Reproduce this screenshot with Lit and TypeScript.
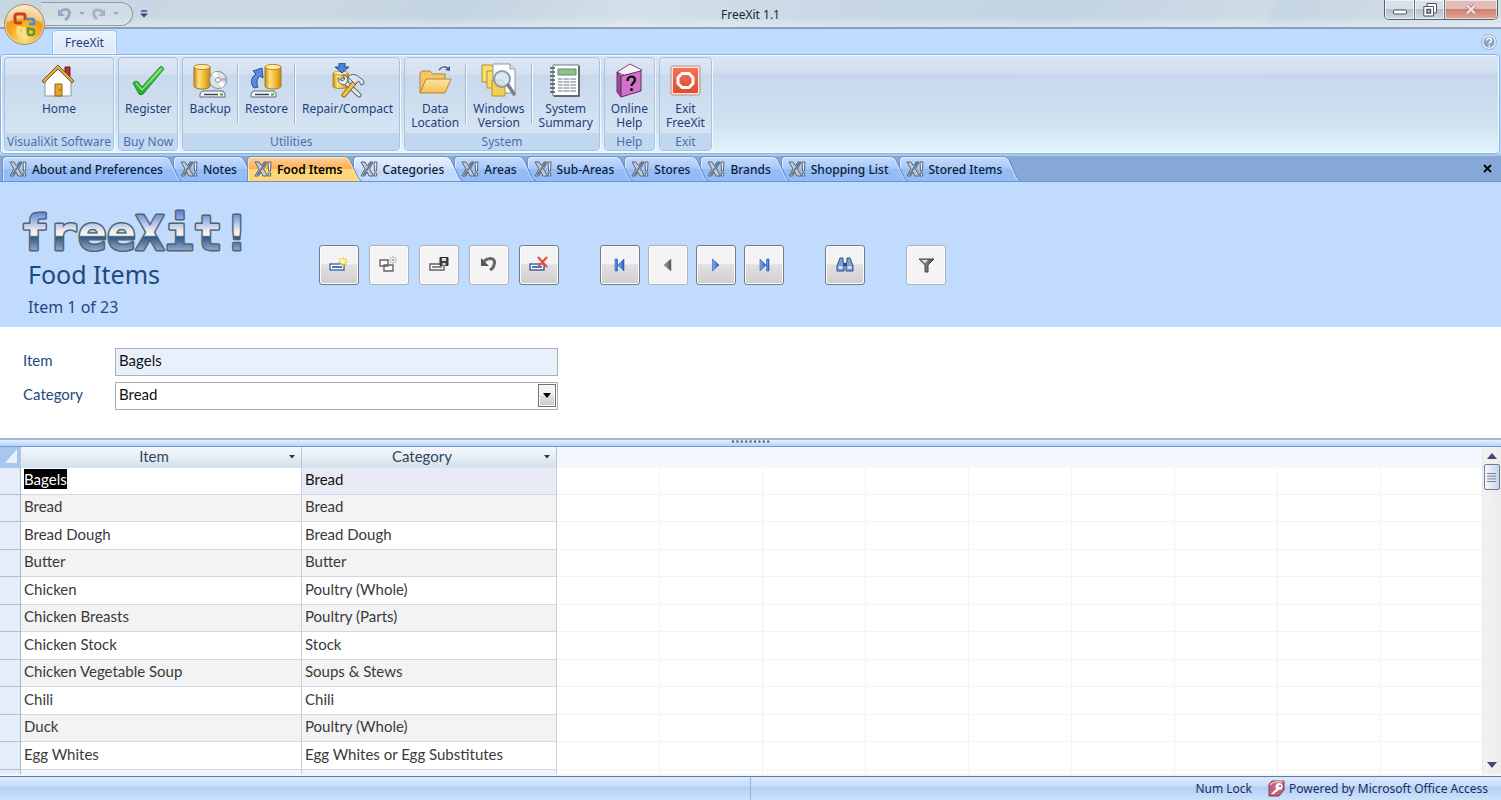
import { LitElement, html, css, svg, nothing } from "lit";
import { customElement, state } from "lit/decorators.js";
import { classMap } from "lit/directives/class-map.js";
import { styleMap } from "lit/directives/style-map.js";

/* ---------- ribbon artwork ---------- */

const drive = svg`
  <path d="M6 27h21l2 3v3H4v-3z" fill="#f4f6f9" stroke="#5d6672"/>
  <path d="M8 30.5h14" stroke="#3d444e" stroke-width="1.6"/>
  <rect x="24" y="29.5" width="3" height="2" fill="#39a94a"/>`;

const cylinder = svg`
  <path d="M0 3v19c0 4 16 4 16 0V3z" fill="url(#gold)" stroke="#a97a1c"/>
  <ellipse cx="8" cy="3" rx="8" ry="2.6" fill="#fdeaa6" stroke="#b98a26"/>`;

const ribbonIcons: Record<string, unknown> = {
  home: svg`
    <path d="M24 4h5v11h-5z" fill="#a33b34" stroke="#6d211d"/>
    <path d="M4 17 17 5l13 12v16H4z" fill="#fdfdfe" stroke="#8a93a0"/>
    <path d="M1 18 17 2l16 16-2 2L17 6 3 20z" fill="#d9a94a" stroke="#7c5a1e"/>
    <path d="M14 21h7v12h-7z" fill="#e8a32c" stroke="#8f6516"/>
    <circle cx="19" cy="27" r=".8" fill="#6b4a0c"/>`,
  check: svg`
    <path d="M2 20c2-2 3-2 5-1l4 5L29 4c2-1 3 0 4 2L12 31c-1 1-3 1-4 0z" fill="url(#green)" stroke="#1d8a26"/>
    <path d="M5 20l6 7L30 6" fill="none" stroke="#a6f09a" stroke-width="1.2" opacity=".8"/>`,
  backup: svg`
    <g transform="translate(1 1)">${cylinder}</g>
    <g transform="translate(3 1)">${drive}</g>
    <circle cx="25" cy="17" r="8.5" fill="#dfe4ea" stroke="#7d8794"/>
    <path d="M25 17 19 11a8.500 8.500 0 0 1 5-2.300zM25 17l7 4a8.500 8.500 0 0 1-4 4z" fill="#fff"/>
    <path d="M25 17l8-3a8 8 0 0 1 .3 4z" fill="#b9a9dc"/>
    <circle cx="25" cy="17" r="2.500" fill="#fff" stroke="#858f9c"/>`,
  restore: svg`
    <g transform="translate(16 1)">${cylinder}</g>
    <g transform="translate(-2 1)">${drive}</g>
    <path d="M5 25c-4-5-3-11 2-14l-3-3 9-3 1 10-3-2c-3 2-4 7-2 11z" fill="#5b8ce0" stroke="#24509f"/>`,
  repair: svg`
    <g transform="translate(3 8) scale(.95 .7)">${cylinder}</g>
    <path d="M9 0h6v4h4l-7 6-7-6h4z" fill="#4a83dc" stroke="#1f4d9b"/>
    <path d="M29 32 13 17" stroke="#5f6873" stroke-width="5" stroke-linecap="round"/>
    <path d="M29 32 13 17" stroke="#e9edf2" stroke-width="3" stroke-linecap="round"/>
    <path d="M8 15c0 5 4 8 8 6l1-2c2-4-1-7-4-7l2 4-3 2z" fill="#e9edf2" stroke="#5f6873"/>
    <path d="M14 32 25 19" stroke="#8f6516" stroke-width="5" stroke-linecap="round"/>
    <path d="M14 32 25 19" stroke="#f0c44e" stroke-width="3" stroke-linecap="round"/>
    <path d="M18 14c3-4 9-3 12 1 3 1 4 3 4 6l-3 1-2-4-4 3z" fill="#dbe1e8" stroke="#5f6873"/>`,
  folder: svg`
    <path d="M2 30V10l2-2h8l3 3h12v6" fill="#f3c766" stroke="#b58630"/>
    <path d="M2 30 8 16h25l-6 14z" fill="url(#folder)" stroke="#b58630"/>
    <path d="M21 7c3-4 7-4 9-1" fill="none" stroke="#44607f" stroke-width="1.500"/>
    <path d="m27 7 5 1V3z" fill="#44607f"/>`,
  search: svg`
    <path d="M1 2h9l3 3v14H1z" fill="#f7dc6e" stroke="#b3912b"/>
    <path d="M6 8h9l3 3v14H6z" fill="#f7dc6e" stroke="#b3912b"/>
    <path d="M12 1h17l5 5v24H12z" fill="#fff" stroke="#8d97a5"/>
    <path d="M29 1v5h5" fill="#dde4ee" stroke="#8d97a5"/>
    <path d="M11 17h10l3 3v13H11z" fill="#f5d04e" stroke="#b3912b"/>
    <circle cx="21" cy="16" r="8" fill="#cfe3f5" fill-opacity=".85" stroke="#8c9aac" stroke-width="2"/>
    <path d="m27 22 6 9" stroke="#767f8c" stroke-width="3.400" stroke-linecap="round"/>`,
  report: svg`
    <path d="M5 2h26v31H5z" fill="#fff" stroke="#6b797e"/>
    <path d="M31 3v30H6" fill="none" stroke="#4a565c" stroke-width="1.500"/>
    <path d="M10 6h18v6H10z" fill="#8fbf8c" stroke="#5d9261"/>
    <path d="M10 16h18M10 19h18M10 22h18M10 25h18M10 28h18" stroke="#97a2b0" stroke-width="1.500"/>
    <path d="M15 15v15M22 15v15" stroke="#fff"/>
    <path d="M2 5h5M2 9h5M2 13h5M2 17h5M2 21h5M2 25h5M2 29h5" stroke="#4b565f" stroke-width="1.500"/>`,
  book: svg`
    <path d="M5 9 18 1l12 6-12 8z" fill="#f5f1f6" stroke="#7a4a78"/>
    <path d="M5 9l4 4v21l-4-5z" fill="#a24a9b" stroke="#6b2a68"/>
    <path d="M9 13l20-5v20L9 34z" fill="#cf74c8" stroke="#6b2a68"/>
    <path d="M15.500 18c0-5 7.500-6 7.500-1.500 0 3.500-3.500 3.500-3.500 6.500" fill="none" stroke="#111" stroke-width="2.400"/>
    <circle cx="19.500" cy="26.500" r="1.600" fill="#111"/>`,
  stop: svg`
    <rect x="4" y="4" width="27" height="27" rx="2" fill="url(#red)" stroke="#f8e6e0" stroke-width="2"/>
    <rect x="3" y="3" width="29" height="29" rx="2" fill="none" stroke="#bb8a80"/>
    <path d="M14 10.500h7l4 4v6l-4 4h-7l-4-4v-6z" fill="none" stroke="#fff" stroke-width="3"/>`,
};

/* ---------- record toolbar artwork ---------- */

const record = (frame: string, fill: string) => svg`
  <path d="M2 10h14v6H2z" fill="#fff" stroke="${frame}" stroke-width="1.500"/>
  <path d="M4 12h10v2H4z" fill="${fill}"/>`;

const toolIcons: Record<string, unknown> = {
  add: svg`${record("#5b6f93", "#3a78e0")}
    <path d="M15 3v10M10 8h10M11.500 4.500l7 7M18.500 4.500l-7 7" stroke="#ecd03c" stroke-width="1.500" stroke-dasharray="2.500 1"/>
    <circle cx="15" cy="8" r="2" fill="#fff8b8"/>`,
  duplicate: svg`
    <path d="M2 6h8v6H2zM6 11h9v6H6z" fill="#fff" stroke="#666" stroke-width="1.400"/>
    <path d="M15 2v8M11 6h8M12 3l6 6M18 3l-6 6" stroke="#a5a5a5" stroke-dasharray="2 1"/>`,
  save: svg`${record("#666", "#888")}
    <path d="M12 3.500h8v8h-8z" fill="#444" stroke="#333"/><path d="M14 4h4v3h-4zM14.500 9h3v2.500h-3z" fill="#ddd"/>`,
  undo: svg`<path d="M6 7c7-5 12-2 10 4-.5 3-2 4-4 5" fill="none" stroke="#666" stroke-width="3"/>
    <path d="M3 4v8h8z" fill="#555"/>`,
  remove: svg`${record("#4b628c", "#3a78e0")}
    <path d="m10 3 9 10M19 3l-9 10" stroke="#e8503a" stroke-width="2.200"/>`,
  first: svg`<path d="M6 5h2.500v12H6z" fill="url(#nav)" stroke="#2757b5" stroke-width=".6"/>
    <path d="M15 5v12L9 11z" fill="url(#nav)" stroke="#2757b5" stroke-width=".6"/>`,
  previous: svg`<path d="M14 5v12L7 11z" fill="url(#gray)" stroke="#777" stroke-width=".6"/>`,
  next: svg`<path d="M7.500 5v12l6.500-6z" fill="url(#nav)" stroke="#2757b5" stroke-width=".6"/>`,
  last: svg`<path d="M7 5v12l6-6z" fill="url(#nav)" stroke="#2757b5" stroke-width=".6"/>
    <path d="M13.500 5H16v12h-2.500z" fill="url(#nav)" stroke="#2757b5" stroke-width=".6"/>`,
  find: svg`<path d="M6 4h3v3l1 3v7H3v-5zM13 4h3l3 8v5h-7v-7l1-3z" fill="#7ba1d8" stroke="#2c4f8a"/>
    <path d="M9 9h4v3H9z" fill="#2c4f8a"/><path d="M4.500 13.500h4M13.500 13.500h4" stroke="#eef5ff" stroke-width="2"/>`,
  filter: svg`<path d="M4 5h15l-6 6v7h-3v-7z" fill="url(#gray)" stroke="#444"/><path d="M7 6h6l-3 3z" fill="#eee"/>`,
};

const defs = svg`
  <linearGradient id="gold"><stop offset="0" stop-color="#c98a12"/><stop offset=".3" stop-color="#ffe27e"/><stop offset=".7" stop-color="#eeb32c"/><stop offset="1" stop-color="#c48a17"/></linearGradient>
  <linearGradient id="green" x2="0" y2="1"><stop offset="0" stop-color="#5fd44f"/><stop offset="1" stop-color="#23a92c"/></linearGradient>
  <linearGradient id="folder" x2="0" y2="1"><stop offset="0" stop-color="#ffe6a0"/><stop offset="1" stop-color="#f4bd57"/></linearGradient>
  <linearGradient id="red" x2="0" y2="1"><stop offset="0" stop-color="#f4745a"/><stop offset="1" stop-color="#e0482c"/></linearGradient>
  <linearGradient id="nav"><stop offset="0" stop-color="#7fb0f8"/><stop offset="1" stop-color="#2459c4"/></linearGradient>
  <linearGradient id="gray"><stop offset="0" stop-color="#aaa"/><stop offset="1" stop-color="#4c4c4c"/></linearGradient>`;

interface Command { icon: string; lines: string[] }
interface Group { title: string; commands: Command[] }

const groups: Group[] = [
  { title: "VisualiXit Software", commands: [{ icon: "home", lines: ["Home"] }] },
  { title: "Buy Now", commands: [{ icon: "check", lines: ["Register"] }] },
  { title: "Utilities", commands: [
    { icon: "backup", lines: ["Backup"] },
    { icon: "restore", lines: ["Restore"] },
    { icon: "repair", lines: ["Repair/Compact"] },
  ] },
  { title: "System", commands: [
    { icon: "folder", lines: ["Data", "Location"] },
    { icon: "search", lines: ["Windows", "Version"] },
    { icon: "report", lines: ["System", "Summary"] },
  ] },
  { title: "Help", commands: [{ icon: "book", lines: ["Online", "Help"] }] },
  { title: "Exit", commands: [{ icon: "stop", lines: ["Exit", "FreeXit"] }] },
];

const documents = ["About and Preferences", "Notes", "Food Items", "Categories", "Areas",
  "Sub-Areas", "Stores", "Brands", "Shopping List", "Stored Items"];

const tools: { icon: string; label: string; disabled?: boolean }[][] = [
  [
    { icon: "add", label: "Add record" },
    { icon: "duplicate", label: "Duplicate record", disabled: true },
    { icon: "save", label: "Save record", disabled: true },
    { icon: "undo", label: "Undo", disabled: true },
    { icon: "remove", label: "Delete record" },
  ],
  [
    { icon: "first", label: "First record" },
    { icon: "previous", label: "Previous record", disabled: true },
    { icon: "next", label: "Next record" },
    { icon: "last", label: "Last record" },
  ],
  [{ icon: "find", label: "Find" }],
  [{ icon: "filter", label: "Filter", disabled: true }],
];

const items: [string, string][] = [
  ["Bagels", "Bread"],
  ["Bread", "Bread"],
  ["Bread Dough", "Bread Dough"],
  ["Butter", "Butter"],
  ["Chicken", "Poultry (Whole)"],
  ["Chicken Breasts", "Poultry (Parts)"],
  ["Chicken Stock", "Stock"],
  ["Chicken Vegetable Soup", "Soups & Stews"],
  ["Chili", "Chili"],
  ["Duck", "Poultry (Whole)"],
  ["Egg Whites", "Egg Whites or Egg Substitutes"],
  ["", ""],
];

const buttonReset = css`
  * { box-sizing: border-box; }
  button {
    font: inherit;
    color: inherit;
    margin: 0;
    padding: 0;
    border: 0;
    background: none;
  }
  svg { display: block; flex: none; }
`;

/* ---------- title bar ---------- */

@customElement("window-title")
class WindowTitle extends LitElement {
  static styles = [buttonReset, css`
    :host {
      box-sizing: border-box;
      position: relative;
      display: grid;
      grid-template-columns: 1fr auto 1fr;
      align-items: start;
      height: 29px;
      border-bottom: 2px solid #8e9fb5;
      background:
        linear-gradient(180deg, rgba(255,255,255,.1) 60%, rgba(240,248,255,.5)),
        linear-gradient(115deg, #bfd1de 0, #c6d5e0 20%, #bccedd 30%, #cfdce6 42%, #c3d3e2 56%, #bdcede 70%, #c9d7e3 84%, #c0d1df 85%, #d2dde6);
      color: #1c2733;
    }
    .quick {
      display: flex;
      align-items: center;
      height: 27px;
      padding-left: 41px;
    }
    .pill {
      display: flex;
      align-items: center;
      gap: 5px;
      height: 24px;
      padding: 0 12px 0 16px;
      border: 1px solid #8e9aaa;
      border-left: 0;
      border-radius: 0 12px 12px 0;
      background: rgba(255,255,255,.15);
    }
    .more { margin-left: 7px; }
    .caption { font-size: 12px; line-height: 29px; }
    .frame {
      display: flex;
      justify-self: end;
      height: 20px;
      margin-right: 3px;
      overflow: hidden;
      border: 1px solid #56616f;
      border-top: 0;
      border-radius: 0 0 5px 5px;
      color: #4c5563;
    }
    .frame button {
      display: grid;
      place-items: center;
      width: 30px;
      border-right: 1px solid #6b7684;
      box-shadow: inset 0 0 0 1px rgba(255,255,255,.6);
      background: linear-gradient(#d9e0e8 0 45%, #b2bdca 46%, #d3dce5);
    }
    .frame .close {
      width: 52px;
      border-right: 0;
      background: linear-gradient(#e0bdb8 0 45%, #d07b6d 46%, #dfa89b);
    }
    .orb {
      position: absolute;
      left: 3px;
      top: 3px;
      z-index: 5;
    }
  `];

  render() {
    const drop = html`<svg width="8" height="5" viewBox="0 0 8 5"><path d="M1 1h6L4 4z" fill="#98a5b7"/></svg>`;
    return html`
      <div class="quick">
        <div class="pill">
          <button aria-label="Undo"><svg width="16" height="16" viewBox="0 0 16 16"><path d="M3 6c6-5 11-2 9 3-.6 2-2 4-4 5" fill="none" stroke="#94a6c2" stroke-width="2.800"/><path d="M1 3v7h7z" fill="#94a6c2"/></svg></button>
          ${drop}
          <button aria-label="Redo"><svg width="16" height="16" viewBox="0 0 16 16"><path d="M12 6C7 2 1 4 3 9c.6 2 1.500 3 3 4" fill="none" stroke="#a5b3c8" stroke-width="2.800"/><path d="M14 3v7H7z" fill="#a5b3c8"/></svg></button>
          ${drop}
        </div>
        <button class="more" aria-label="Customize toolbar"><svg width="8" height="8" viewBox="0 0 8 8"><path d="M1 1h6" stroke="#27497c" stroke-width="1.500"/><path d="M0 3.500h8L4 7.500z" fill="#27497c"/></svg></button>
      </div>
      <div class="caption">FreeXit 1.1</div>
      <div class="frame">
        <button aria-label="Minimize"><svg width="14" height="14" viewBox="0 0 14 14"><rect x=".5" y="7" width="13" height="4" rx="1" fill="#fff" stroke="#4c5563"/></svg></button>
        <button aria-label="Restore"><svg width="14" height="14" viewBox="0 0 14 14"><path d="M4 3V.5h9.500V10H11" fill="#fff" stroke="#4c5563"/><path d="M.8 3.500h9.700v9.500H.8z" fill="#fff" stroke="#4c5563"/><path d="M4 6.500h3.500V10H4z" fill="#cfd8e2" stroke="#4c5563" stroke-width="1.500"/></svg></button>
        <button class="close" aria-label="Close"><svg width="12" height="11" viewBox="0 0 12 11"><path d="m2 1.500 8 8M10 1.500l-8 8" stroke="#a98688" stroke-width="4"/><path d="m2 1.500 8 8M10 1.500l-8 8" stroke="#f3e2e0" stroke-width="2.400"/></svg></button>
      </div>
      <button class="orb" aria-label="Office menu">
        <svg width="43" height="43" viewBox="0 0 43 43">
          <defs><radialGradient id="o" cx=".5" cy=".85" r=".9"><stop offset="0" stop-color="#ffe98a"/><stop offset=".35" stop-color="#f8b52c"/><stop offset=".6" stop-color="#ee9a1e"/><stop offset="1" stop-color="#fbe2b0"/></radialGradient></defs>
          <circle cx="21.500" cy="21.500" r="20" fill="#e3d4b0" stroke="#a98b52"/>
          <circle cx="21.500" cy="21.500" r="18.500" fill="url(#o)"/>
          <path d="M4 19a17.500 17 0 0 1 35 0c-10-4-25-4-35 0z" fill="#fff" opacity=".4"/>
          <g fill="none" stroke-width="3">
            <path d="M19 20h-5q-2 0-2-2v-5q0-2 2-2h6q2 0 2 2v4" stroke="#c8401c"/>
            <path d="M24 16h5q2 0 2 2v3h-5" stroke="#3f8fd0" stroke-width="2.500"/>
            <path d="M21 24v5q0 2-2 2h-2q-2 0-2-2v-4h4" stroke="#fbe08a"/>
            <path d="M25 24v6q0 2 2 2h2q2 0 2-2v-2q0-2-2-2h-3" stroke="#5b9a37" stroke-width="2.500"/>
          </g>
        </svg>
      </button>`;
  }
}

/* ---------- ribbon ---------- */

@customElement("office-ribbon")
class OfficeRibbon extends LitElement {
  static styles = [buttonReset, css`
    :host { display: block; background: #bfdbff; color: #1e3f7d; }
    .tabs {
      display: flex;
      align-items: flex-end;
      justify-content: space-between;
      height: 25px;
      padding: 0 4px 0 52px;
    }
    .tab {
      height: 24px;
      padding: 0 12px;
      border: 1px solid #9dc0ee;
      border-bottom: 0;
      border-radius: 4px 4px 0 0;
      box-shadow: inset 0 0 0 1px #f2faff;
      background: linear-gradient(#eaf3fd, #dde8f5);
      font-size: 12px;
    }
    .help { align-self: center; }
    .panel {
      display: flex;
      gap: 4px;
      height: 100px;
      margin-right: 1px;
      padding: 2px 3px;
      border: 1px solid #8db2e3;
      border-radius: 4px;
      box-shadow: inset 0 0 0 1px #eefaff;
      background: linear-gradient(#dbe6f4 0, #d1deee 18%, #c7d8ed 19%, #d2e1f0 72%, #e3f4fd 100%);
    }
    .group {
      display: flex;
      flex-direction: column;
      overflow: hidden;
      height: 94px;
      border: 1px solid #a9c3df;
      border-radius: 4px;
      box-shadow: 1px 1px 0 #eff8ff;
      background: linear-gradient(#dee8f5 0, #d2dfef 18%, #c8d9ed 19%, #d6e4f2 82%);
    }
    .commands { display: flex; flex: 1; justify-content: center; padding-top: 5px; }
    .command {
      display: flex;
      flex-direction: column;
      align-items: center;
      padding: 0 6px;
      font-size: 12px;
      line-height: 14px;
    }
    .command svg { margin-bottom: 4px; }
    .rule { width: 2px; height: 61px; border-left: 1px solid #9fb8d6; border-right: 1px solid #f1f8ff; }
    .title {
      height: 17px;
      padding: 0 2px;
      background: #c1d8f0;
      color: #4a6fa9;
      font-size: 12px;
      line-height: 17px;
      text-align: center;
    }
  `];

  render() {
    return html`
      <div class="tabs">
        <button class="tab">FreeXit</button>
        <button class="help" aria-label="Help">
          <svg width="16" height="16" viewBox="0 0 16 16"><circle cx="8" cy="8" r="7.500" fill="#eaf2fb" stroke="#9fb0c6"/><circle cx="8" cy="8" r="5.600" fill="#8ba4c8"/><path d="M5.800 6.500c0-3 4.600-3 4.600-.3 0 1.800-2.200 1.700-2.200 3.600M8.200 11v1.400" fill="none" stroke="#fff" stroke-width="1.500"/></svg>
        </button>
      </div>
      <div class="panel">
        ${groups.map((g) => html`
          <section class="group">
            <div class="commands">
              ${g.commands.map((c, i) => html`
                ${i ? html`<span class="rule"></span>` : nothing}
                <button class="command">
                  <svg width="35" height="35" viewBox="0 0 35 35"><defs>${defs}</defs>${ribbonIcons[c.icon]}</svg>
                  ${c.lines.map((l) => html`<span>${l}</span>`)}
                </button>`)}
            </div>
            <div class="title">${g.title}</div>
          </section>`)}
      </div>`;
  }
}

/* ---------- document tabs ---------- */

@customElement("document-tabs")
class DocumentTabs extends LitElement {
  @state() private active = 2;

  static styles = [buttonReset, css`
    :host {
      box-sizing: border-box;
      display: flex;
      align-items: flex-end;
      justify-content: space-between;
      height: 28px;
      padding-right: 3px;
      border-top: 2px solid #a9c8ea;
      border-bottom: 1px solid #6a94d0;
      background: #86a8d6;
      color: #101c33;
    }
    .strip { display: flex; padding-left: 2px; isolation: isolate; }
    .tab {
      position: relative;
      display: flex;
      height: 25px;
      margin-right: -9px;
      --top: #c6dcfb;
      --mid: #a5c8fa;
      --low: #94bdf7;
      font-size: 12px;
      font-weight: 500;
    }
    .tab.hot { --top: #e6f0fe; --mid: #cfe1fc; --low: #c2dafc; }
    .tab.active { --top: #fdd09a; --mid: #fbaf54; --low: #ffd678; font-weight: 600; color: #000; }
    .body {
      display: flex;
      align-items: center;
      gap: 5px;
      padding-left: 6px;
      border-top: 1px solid #6f94c8;
      border-left: 1px solid #6f94c8;
      border-top-left-radius: 4px;
      box-shadow: inset 1px 1px 0 rgba(255,255,255,.5);
      background: linear-gradient(var(--top), var(--mid) 50%, var(--low) 52%, var(--low));
    }
    .s1 { stop-color: var(--top); }
    .s2 { stop-color: var(--mid); }
    .s3 { stop-color: var(--low); }
    .x { padding: 6px; align-self: center; }
  `];

  render() {
    return html`
      <div class="strip" role="tablist">
        ${documents.map((name, i) => html`
          <button role="tab" aria-selected=${i === this.active}
            class=${classMap({ tab: true, active: i === this.active, hot: i === 3 })}
            style=${styleMap({ zIndex: String(i === this.active ? 20 : 10 - i) })}
            @click=${() => { this.active = i; }}>
            <span class="body">
              <svg width="18" height="16" viewBox="0 0 18 16">
                <path d="M1 1h4l2.500 4L10 1h3L9.500 8l4 7H9l-2-4-2.500 4H1l4-7z" fill="#c3ccd4" stroke="#59646f"/>
                <path d="M3.500 14 11.500 1.500" stroke="#5d7188" stroke-width="1.500"/>
                <path d="M14 1h3l-.5 9h-2zM14.200 12h2.500v3h-2.500z" fill="#e3e8ec" stroke="#59646f"/>
              </svg>
              ${name}
            </span>
            <svg width="19" height="25" viewBox="0 0 19 25">
              <defs><linearGradient id="cap${i}" gradientUnits="userSpaceOnUse" x1="0" y1="0" x2="0" y2="25"><stop class="s1" offset="0"/><stop class="s2" offset=".5"/><stop class="s3" offset=".52"/></linearGradient></defs>
              <path d="M0 0c4 0 6 1 8 6l6 13c1.500 4 3 6 5 6H0z" fill="url(#cap${i})"/>
              <path d="M0 1.500c4 0 5 1 7 5l6 13c1 2 2 4 3 5" fill="none" stroke="#fff" stroke-opacity=".5"/>
              <path d="M0 .5c4 0 6 1 8 5.500l6 13c1.500 4 3 5.500 5 5.500" fill="none" stroke="#6289c0"/>
            </svg>
          </button>`)}
      </div>
      <button class="x" aria-label="Close tab"><svg width="9" height="9" viewBox="0 0 9 9"><path d="m1 1 7 7M8 1 1 8" stroke="#000" stroke-width="1.800"/></svg></button>`;
  }
}

/* ---------- record header and form ---------- */

@customElement("record-form")
class RecordForm extends LitElement {
  static styles = [buttonReset, css`
    :host { display: block; }
    .header {
      display: flex;
      align-items: flex-start;
      height: 145px;
      background: #c1dbff;
      color: #1f497d;
    }
    .brand { width: 319px; padding: 22px 0 0 22px; }
    h1, p { margin: 0 0 0 6px; font-weight: 400; }
    h1 { font-size: 25px; line-height: 30px; }
    p { margin-top: 7px; font-size: 16px; line-height: 22px; }
    .logo { overflow: visible; font: 700 48px "DejaVu Sans Mono", monospace; }
    .logo text { paint-order: stroke; stroke-linejoin: round; }
    .tools { display: flex; gap: 41px; padding-top: 63px; }
    .set { display: flex; gap: 8px; }
    .set:first-child { gap: 10px; }
    .tool {
      display: grid;
      place-items: center;
      width: 40px;
      height: 40px;
      border: 1px solid #747d88;
      border-radius: 3px;
      box-shadow: inset 0 0 0 1px #fcfcfc;
      background: linear-gradient(#f3f3f3 0 48%, #e1e1e1 49%, #cfcfcf);
    }
    .tool:disabled { border-color: #adb2b5; background: #f4f4f4; }
    .form {
      display: grid;
      grid-template-columns: 92px 443px;
      align-items: center;
      gap: 6px 0;
      padding: 21px 23px 28px;
      background: #fff;
      font-family: Lato, sans-serif;
      font-size: 15px;
    }
    label { padding-bottom: 4px; color: #1f497d; }
    input, select {
      width: 100%;
      height: 28px;
      margin: 0;
      padding: 0 3px 4px;
      border: 1px solid #abb0b8;
      border-radius: 0;
      outline: 0;
      background: #fff;
      color: #111;
      font: inherit;
    }
    input { background: #e8f0fb; }
    select { appearance: none; }
    .combo { position: relative; }
    .arrow {
      position: absolute;
      right: 2px;
      top: 2px;
      display: grid;
      place-items: center;
      width: 18px;
      height: 23px;
      border: 1px solid #707070;
      box-shadow: inset 0 0 0 1px #fbfbfb;
      background: linear-gradient(#f2f2f2 0 48%, #dedede 49%, #cfcfcf);
      pointer-events: none;
    }
  `];

  render() {
    return html`
      <header class="header">
        <div class="brand">
          <svg class="logo" width="230" height="55" viewBox="0 0 230 55">
            <defs><linearGradient id="chrome" gradientUnits="userSpaceOnUse" x1="0" y1="8" x2="0" y2="48">
              <stop offset="0" stop-color="#5f84dc"/><stop offset=".45" stop-color="#e6e9ee"/><stop offset=".58" stop-color="#fbf8e6"/>
              <stop offset=".62" stop-color="#2a5888"/><stop offset="1" stop-color="#9bb3d3"/>
            </linearGradient></defs>
            <text x="-2" y="46" fill="url(#chrome)" stroke="#55626d" stroke-width="3">freeXit!</text>
          </svg>
          <h1>Food Items</h1>
          <p>Item 1 of 23</p>
        </div>
        <div class="tools">
          ${tools.map((set) => html`<div class="set">${set.map((t) => html`
            <button class="tool" aria-label=${t.label} ?disabled=${!!t.disabled}>
              <svg width="22" height="22" viewBox="0 0 22 22"><defs>${defs}</defs>${toolIcons[t.icon]}</svg>
            </button>`)}</div>`)}
        </div>
      </header>
      <form class="form">
        <label for="item">Item</label>
        <input id="item" value="Bagels">
        <label for="category">Category</label>
        <div class="combo">
          <select id="category"><option>Bread</option></select>
          <span class="arrow"><svg width="8" height="5" viewBox="0 0 8 5"><path d="M0 0h8L4 5z" fill="#000"/></svg></span>
        </div>
      </form>`;
  }
}

/* ---------- datasheet ---------- */

@customElement("data-sheet")
class DataSheet extends LitElement {
  static styles = [buttonReset, css`
    :host {
      display: flex;
      flex-direction: column;
      flex: 1;
      min-height: 0;
      background: #fff;
    }
    .splitter {
      display: grid;
      place-items: center;
      flex: none;
      height: 9px;
      padding-bottom: 2px;
      border-top: 2px solid #a3b9d1;
      border-bottom: 1px solid #6f9cd6;
      background: linear-gradient(#e3effd, #b5d3fb);
    }
    .view { display: flex; flex: 1; min-height: 0; }
    .sheet { flex: 1; overflow: hidden; }
    table {
      width: 100%;
      border-collapse: separate;
      border-spacing: 0;
      table-layout: fixed;
      font-family: Lato, sans-serif;
      font-size: 15px;
      line-height: 20px;
      color: #3a3a3a;
    }
    .c0 { width: 21px; }
    .c1 { width: 281px; }
    .c2 { width: 255px; }
    th {
      height: 21px;
      padding: 0 0 3px;
      border-right: 1px solid #b3c8de;
      background: linear-gradient(#f3f7fb, #e6eef6 50%, #d3dfea);
      color: #2f4858;
      font-weight: 400;
    }
    th.corner { background: #a9c6ec; }
    th.corner svg { margin-left: 5px; }
    th.rest { border: 0; background: #f5f7ff; }
    .head { display: flex; align-items: center; padding-right: 4px; line-height: 18px; }
    .head span { flex: 1; text-align: center; }
    .head button { padding-top: 2px; }
    td {
      height: 27px;
      padding: 0 3px 4px;
      border-right: 1px solid #c3cfe2;
      border-bottom: 1px solid #d3d9e4;
      white-space: nowrap;
    }
    tr:nth-child(odd) td { height: 28px; }
    tr:first-child td { height: 27px; color: #111; }
    tr:nth-child(even) .cell { background: #f3f3f3; }
    tr:first-child .linked { background: #e8ebf5; }
    td.row { border-right-color: #9fb9dd; border-bottom-color: #a9c2de; background: #e4edf8; }
    td.rest {
      border-right: 0;
      border-bottom-color: #f3f4f5;
      background: repeating-linear-gradient(90deg, transparent 0 102px, #f1f2f4 102px 103px);
    }
    mark { display: inline-block; background: #000; color: #fff; }
    .scroll {
      display: flex;
      flex-direction: column;
      align-items: center;
      width: 19px;
      padding: 6px 1px 6px 0;
      border-left: 1px solid #e6e6e6;
      background: linear-gradient(90deg, #f2f2f2, #ececec);
    }
    .thumb {
      display: grid;
      place-items: center;
      width: 16px;
      height: 26px;
      margin: 5px 0 auto;
      border: 1px solid #6d7a9c;
      border-radius: 2px;
      background: linear-gradient(90deg, #f5f8fb, #e1e8f1 50%, #c5d2e4);
    }
  `];

  render() {
    const filter = html`<button aria-label="Filter column"><svg width="10" height="6" viewBox="0 0 10 6"><path d="M2 1h6L5 4.500z" fill="#333"/></svg></button>`;
    return html`
      <div class="splitter">
        <svg width="40" height="4" viewBox="0 0 40 4"><path d="M1 1.500h38" stroke="#42526b" stroke-width="2" stroke-dasharray="2 2.400"/></svg>
      </div>
      <div class="view">
        <div class="sheet">
          <table>
            <colgroup><col class="c0"><col class="c1"><col class="c2"><col></colgroup>
            <thead><tr>
              <th class="corner"><svg width="12" height="14" viewBox="0 0 12 14"><path d="M12 0v14H0z" fill="#e9f0f8"/></svg></th>
              <th><div class="head"><span>Item</span>${filter}</div></th>
              <th><div class="head"><span>Category</span>${filter}</div></th>
              <th class="rest"></th>
            </tr></thead>
            <tbody>
              ${items.map(([item, category], i) => html`<tr>
                <td class="row"></td>
                <td class="cell">${i ? item : html`<mark>${item}</mark>`}</td>
                <td class="cell linked">${category}</td>
                <td class="rest"></td>
              </tr>`)}
            </tbody>
          </table>
        </div>
        <div class="scroll">
          <button aria-label="Scroll up"><svg width="10" height="6" viewBox="0 0 10 6"><path d="M0 6h10L5 0z" fill="#3f4a6b"/></svg></button>
          <span class="thumb"><svg width="9" height="9" viewBox="0 0 9 9"><path d="M0 .5h9M0 3.200h9M0 5.900h9M0 8.500h9" stroke="#7c8494"/></svg></span>
          <button aria-label="Scroll down"><svg width="10" height="6" viewBox="0 0 10 6"><path d="M0 0h10L5 6z" fill="#3f4a6b"/></svg></button>
        </div>
      </div>`;
  }
}

/* ---------- application ---------- */

@customElement("app-root")
class AppRoot extends LitElement {
  static styles = [buttonReset, css`
    :host {
      display: flex;
      flex-direction: column;
      height: 100vh;
      overflow: hidden;
      background: #bfdbff;
      font-family: "Noto Sans", sans-serif;
    }
    .status {
      display: flex;
      flex: none;
      height: 26px;
      border-top: 2px solid #f2f6fa;
      background: #d3e4fa;
      color: #15305f;
      font-size: 12px;
    }
    .pane {
      display: flex;
      flex: 1;
      align-items: center;
      justify-content: flex-end;
      gap: 4px;
      border-top: 1px solid #567db1;
      background: linear-gradient(#dbe9fc, #c8dcf8 40%, #b3cff5 45%, #cfe2fb);
    }
    .pane:last-child { border-left: 1px solid #8db2e3; }
    .lock { margin-right: 12px; }
    .product { margin-right: 13px; }
  `];

  render() {
    return html`
      <window-title></window-title>
      <office-ribbon></office-ribbon>
      <document-tabs></document-tabs>
      <record-form></record-form>
      <data-sheet></data-sheet>
      <footer class="status">
        <div class="pane"></div>
        <div class="pane">
          <span class="lock">Num Lock</span>
          <svg width="17" height="17" viewBox="0 0 17 17">
            <path d="M4 1h12v9l-5 6H1V4z" fill="#c0627a" stroke="#8b3a4c"/>
            <path d="M2 5c2-3 8-4 13-3" fill="none" stroke="#eab6c0" stroke-width="1.500"/>
            <circle cx="11" cy="6.500" r="3.500" fill="#fff"/><circle cx="12" cy="6" r="1.100" fill="#b8465c"/>
            <path d="m9 8-6 6h3l1-1.500 1.500-.5L11 9.500z" fill="#fff"/>
          </svg>
          <span class="product">Powered by Microsoft Office Access</span>
        </div>
      </footer>`;
  }
}
